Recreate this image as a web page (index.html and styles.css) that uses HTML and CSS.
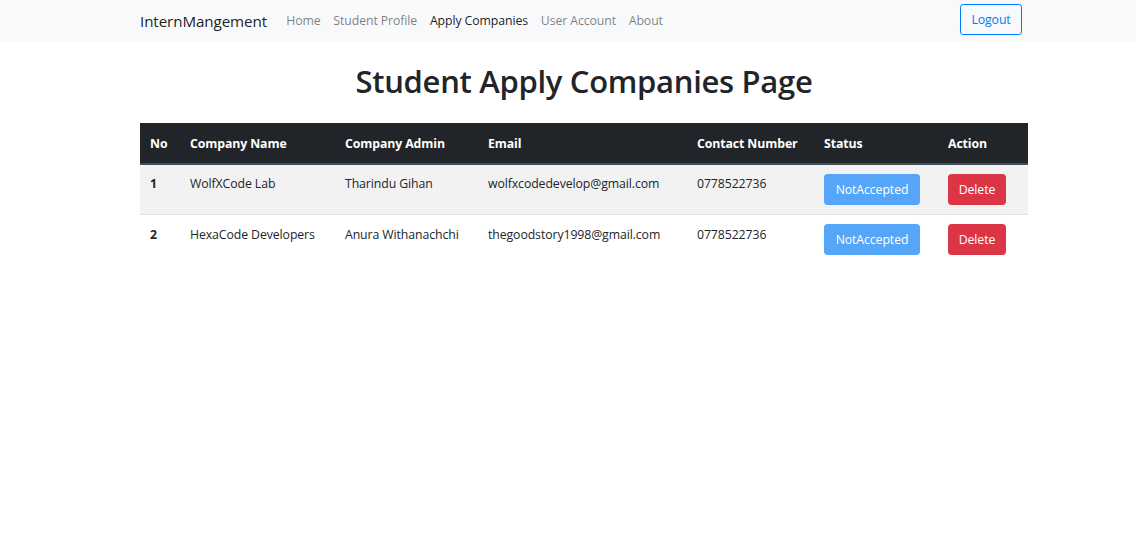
FILE: index.html
```html
<!DOCTYPE html>
<html lang="en">
<head>
<meta charset="utf-8">
<title>Student Apply Companies Page</title>
<link rel="stylesheet" href="styles.css">
</head>
<body>
<nav class="navbar">
  <div class="nav-inner">
    <a class="brand" href="#">InternMangement</a>
    <ul class="nav-links">
      <li><a class="nav-link" href="#">Home</a></li>
      <li><a class="nav-link" href="#">Student Profile</a></li>
      <li><a class="nav-link active" href="#">Apply Companies</a></li>
      <li><a class="nav-link" href="#">User Account</a></li>
      <li><a class="nav-link" href="#">About</a></li>
    </ul>
    <button class="btn btn-outline">Logout</button>
  </div>
</nav>
<main class="container">
  <h1 class="title">Student Apply Companies Page</h1>
  <table class="table">
    <thead>
      <tr>
        <th class="c-no">No</th>
        <th class="c-name">Company Name</th>
        <th class="c-admin">Company Admin</th>
        <th class="c-email">Email</th>
        <th class="c-phone">Contact Number</th>
        <th class="c-status">Status</th>
        <th class="c-action">Action</th>
      </tr>
    </thead>
    <tbody>
      <tr class="striped">
        <th>1</th>
        <td>WolfXCode Lab</td>
        <td>Tharindu Gihan</td>
        <td>wolfxcodedevelop@gmail.com</td>
        <td>0778522736</td>
        <td><button class="btn btn-status" disabled>NotAccepted</button></td>
        <td><button class="btn btn-danger">Delete</button></td>
      </tr>
      <tr>
        <th>2</th>
        <td>HexaCode Developers</td>
        <td>Anura Withanachchi</td>
        <td>thegoodstory1998@gmail.com</td>
        <td>0778522736</td>
        <td><button class="btn btn-status" disabled>NotAccepted</button></td>
        <td><button class="btn btn-danger">Delete</button></td>
      </tr>
    </tbody>
  </table>
</main>
</body>
</html>
```
FILE: styles.css
```css
* { box-sizing: border-box; }
html, body {
  margin: 0;
  padding: 0;
  background: #fff;
  font-family: "Open Sans", "Noto Sans", sans-serif;
  font-size: 12.8px;
  line-height: 1.5;
  color: #212529;
}
.navbar {
  background: #f8f9fa;
  height: 42px;
}
.nav-inner {
  width: 882px;
  margin-left: 140px;
  height: 42px;
  display: flex;
  align-items: center;
}
.brand {
  font-size: 15.2px;
  color: rgba(0,0,0,.9);
  text-decoration: none;
  margin-right: 12.8px;
  letter-spacing: -0.1px;
}
.nav-links {
  list-style: none;
  margin: 0;
  padding: 0;
  display: flex;
  flex: 1;
}
.nav-link {
  display: block;
  padding: 0 6.4px;
  font-size: 12.3px;
  color: rgba(0,0,0,.5);
  text-decoration: none;
  letter-spacing: -0.1px;
}
.nav-link.active { color: rgba(0,0,0,.9); }
.btn {
  font-family: inherit;
  font-size: 12.3px;
  line-height: 19.2px;
  padding: 5px 9.6px;
  border-radius: 3.2px;
  border: 1px solid transparent;
  cursor: pointer;
  letter-spacing: -0.1px;
}
.btn-outline {
  color: #007bff;
  border-color: #007bff;
  background: transparent;
  height: 31px;
  width: 62px;
  padding: 0;
  margin-top: -3px;
}
.container {
  width: 888px;
  margin-left: 140px;
}
.title {
  margin: 19px 0 22px;
  text-align: center;
  font-size: 31px;
  font-weight: 600;
  line-height: 40px;
  letter-spacing: -0.3px;
}
.table {
  width: 888px;
  border-collapse: collapse;
  table-layout: fixed;
}
.table th, .table td {
  padding: 9.6px 10px;
  vertical-align: top;
  text-align: left;
  font-size: 12.3px;
  line-height: 19.2px;
  letter-spacing: -0.1px;
}
.table thead th {
  background: #212529;
  color: #fff;
  font-weight: 700;
  border-bottom: 2px solid #454d55;
  height: 41px;
  padding-top: 11.2px;
  padding-bottom: 8px;
}
.table tbody th, .table tbody td {
  border-top: 1px solid #dee2e6;
  height: 50.6px;
}
.table tbody tr:first-child th, .table tbody tr:first-child td { border-top: none; height: 49.6px; padding-top: 8.8px; }
.table tbody th { font-weight: 700; }
.striped { background: #f2f2f2; }
.c-no { width: 40px; }
.c-name { width: 155px; }
.c-admin { width: 143px; }
.c-email { width: 209px; }
.c-phone { width: 127px; }
.c-status { width: 124px; }
.c-action { width: 90px; }
.table td .btn { margin-top: -0.6px; }
.table tbody tr:first-child td .btn { margin-top: 0; }
.btn-status {
  background: #55a6f8;
  border-color: #55a6f8;
  color: #fff;
  width: 96px;
  height: 31px;
  padding: 0;
  cursor: default;
}
.btn-danger {
  background: #dc3545;
  border-color: #dc3545;
  color: #fff;
  width: 58px;
  height: 31px;
  padding: 0;
}
```
